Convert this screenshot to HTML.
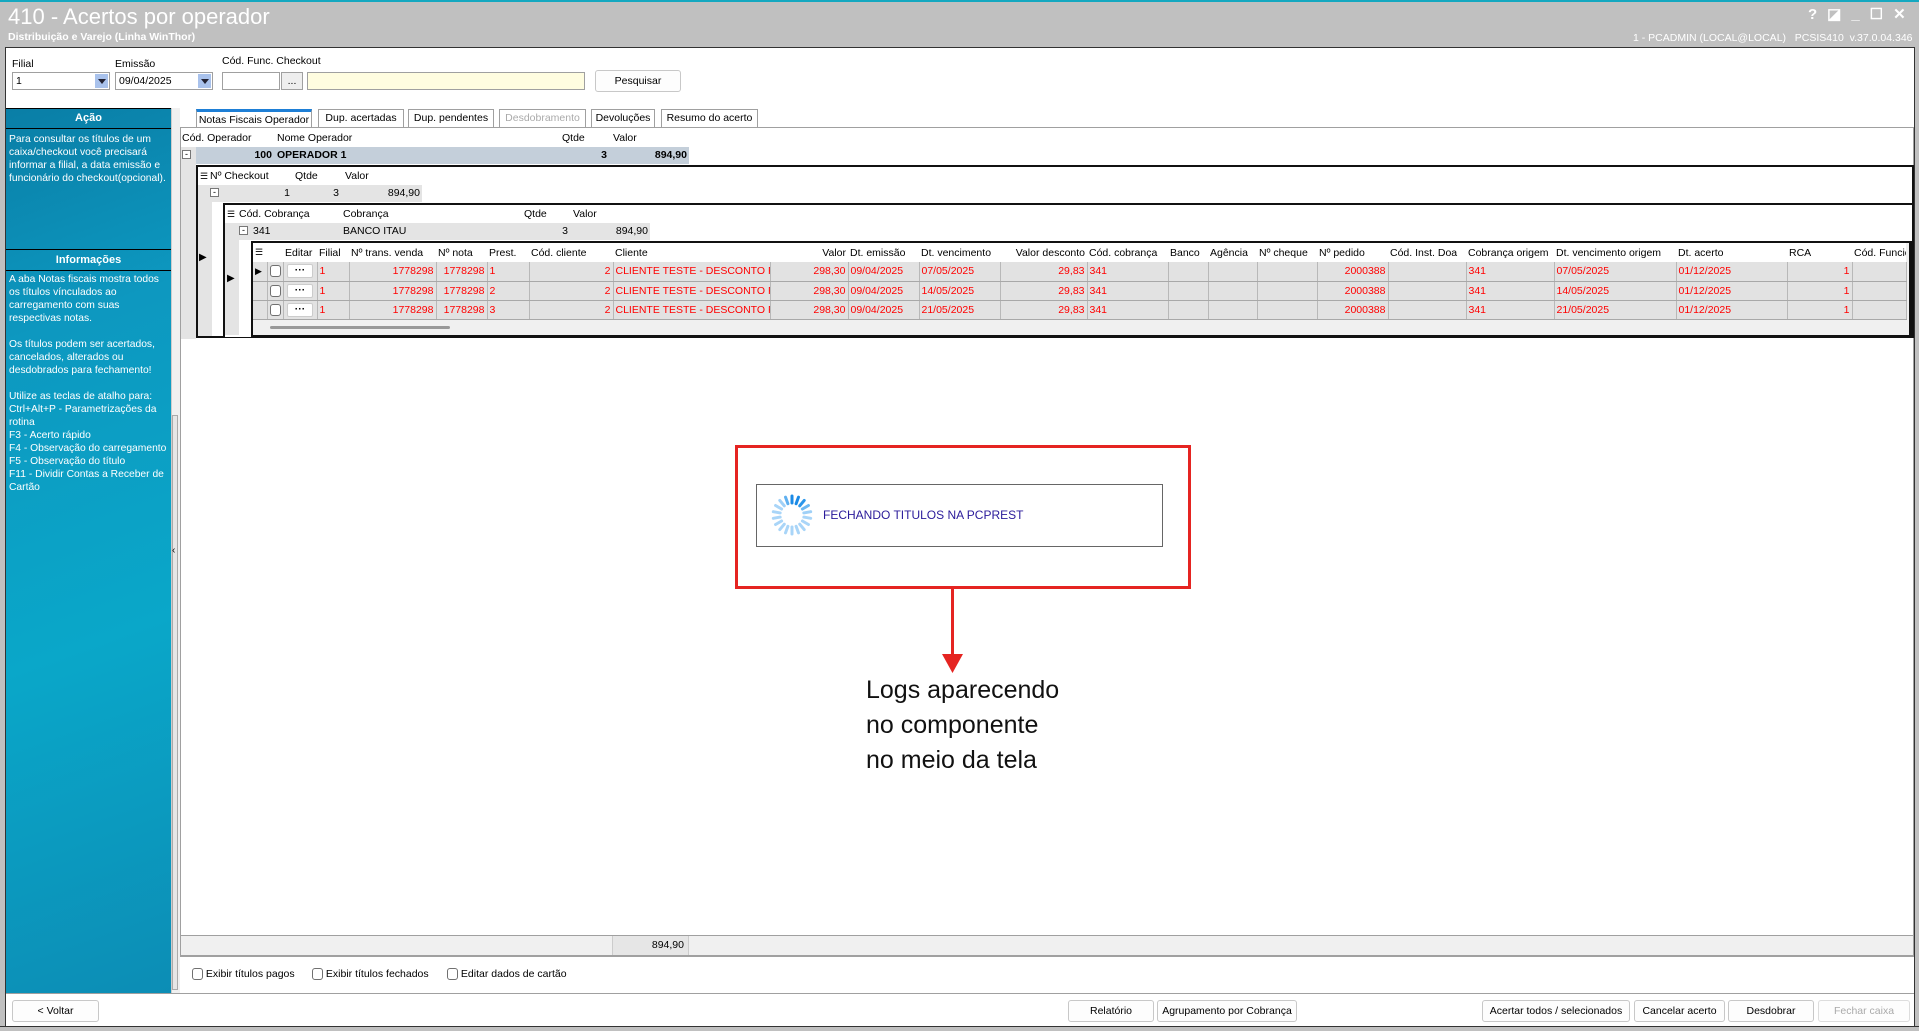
<!DOCTYPE html>
<html><head><meta charset="utf-8">
<style>
*{box-sizing:border-box;margin:0;padding:0}
body{width:1919px;height:1031px;position:relative;overflow:hidden;background:#fff;font-family:"Liberation Sans",sans-serif;font-size:10.5px;color:#000}
.a{position:absolute}
.btn{position:absolute;background:#fdfdfd;border:1px solid #c8c8c8;border-radius:3px;text-align:center;font-size:10.5px;line-height:20px;white-space:nowrap;overflow:hidden}
.inp{position:absolute;background:#fff;border:1px solid #a0a0a0;height:18px;font-size:10.5px;line-height:16px;padding-left:3px}
.dd{position:absolute;right:1px;top:1px;width:13px;height:14px;background:#a9c2ec}
.dd:after{content:"";position:absolute;left:3px;top:5px;border-left:4px solid transparent;border-right:4px solid transparent;border-top:5px solid #223}
.tab{position:absolute;top:109px;height:18px;border:1px solid #a0a0a0;border-bottom:none;background:#fff;font-size:10.5px;line-height:17px;text-align:center;white-space:nowrap;overflow:hidden}
.tx{position:absolute;white-space:nowrap}
.r{text-align:right}
table{border-collapse:collapse;table-layout:fixed;position:absolute;width:1653px}
td{white-space:nowrap;overflow:hidden;font-size:10.5px;padding:0 2px;height:19px}
.hd td{background:#fff;color:#000}
.rw td{background:#e2e2e2;color:#f00;border-right:1px solid #b8b8b8;border-bottom:1px solid #a8a8a8}
.cb{display:inline-block;width:11px;height:12px;border:1px solid #707070;border-radius:3px;background:#fff;vertical-align:middle}
.side{color:#fff;font-size:10.3px;line-height:13px}
</style></head><body>
<div class="a" style="left:0;top:0;width:1919px;height:47px;background:#c0c0c0;border-top:2px solid #14a8c0"></div>
<div class="tx" style="left:8px;top:4px;font-size:22px;color:#fff">410 - Acertos por operador</div>
<div class="tx" style="left:8px;top:31px;font-size:10.5px;color:#fff;font-weight:bold">Distribuição e Varejo (Linha WinThor)</div>
<div class="tx" style="left:1808px;top:5px;font-size:15px;color:#fff;font-weight:bold;letter-spacing:10px">?◪_☐✕</div>
<div class="tx" style="left:1633px;top:32px;font-size:10.5px;color:#fff">1 - PCADMIN (LOCAL@LOCAL) &nbsp; PCSIS410 &nbsp;v.37.0.04.346</div>
<div class="a" style="left:0;top:47px;width:6px;height:984px;background:#c0c0c0;border-right:1px solid #333"></div>
<div class="a" style="left:1914px;top:47px;width:5px;height:984px;background:#c0c0c0;border-left:1px solid #333"></div>
<div class="a" style="left:0;top:1026px;width:1919px;height:5px;background:#c0c0c0;border-top:1px solid #333"></div>
<div class="a" style="left:6px;top:47px;width:1908px;height:1px;background:#333"></div>
<div class="tx" style="left:12px;top:58px">Filial</div>
<div class="tx" style="left:115px;top:58px">Emissão</div>
<div class="tx" style="left:222px;top:55px">Cód. Func. Checkout</div>
<div class="inp" style="left:12px;top:72px;width:98px">1<div class="dd"></div></div>
<div class="inp" style="left:115px;top:72px;width:98px">09/04/2025<div class="dd"></div></div>
<div class="inp" style="left:222px;top:72px;width:58px"></div>
<div class="inp" style="left:281px;top:72px;width:22px;background:#eee;text-align:center;padding:0">...</div>
<div class="inp" style="left:307px;top:72px;width:278px;background:#fffde0"></div>
<div class="btn" style="left:595px;top:70px;width:86px;height:22px">Pesquisar</div>
<div class="a" style="left:6px;top:108px;width:165px;height:885px;background:linear-gradient(160deg,#0a7ea6 0%,#0d98c0 25%,#0aa7c9 60%,#0c8db5 100%)"></div>
<div class="a" style="left:6px;top:108px;width:165px;height:21px;border-top:1px solid #000;border-bottom:1px solid #000;color:#fff;font-weight:bold;text-align:center;line-height:19px;font-size:11px">Ação</div>
<div class="a side" style="left:9px;top:133px;width:162px">Para consultar os títulos de um caixa/checkout você precisará informar a filial, a data emissão e funcionário do checkout(opcional).</div>
<div class="a" style="left:6px;top:249px;width:165px;height:22px;border-top:1px solid #000;border-bottom:1px solid #000;color:#fff;font-weight:bold;text-align:center;line-height:20px;font-size:11px">Informações</div>
<div class="a side" style="left:9px;top:273px;width:162px">A aba Notas fiscais mostra todos os títulos vínculados ao carregamento com suas respectivas notas.<br><br>Os títulos podem ser acertados, cancelados, alterados ou desdobrados para fechamento!<br><br>Utilize as teclas de atalho para:<br>Ctrl+Alt+P - Parametrizações da rotina<br>F3 - Acerto rápido<br>F4 - Observação do carregamento<br>F5 - Observação do título<br>F11 - Dividir Contas a Receber de Cartão</div>
<div class="a" style="left:171px;top:108px;width:9px;height:885px;background:#f0f0f0;border-left:1px solid #ccc"></div>
<div class="a" style="left:172px;top:415px;width:6px;height:575px;background:#e6e6e6;border:1px solid #aaa"></div>
<div class="tx" style="left:172px;top:545px;font-size:10px">‹</div>
<div class="tab" style="left:196px;width:116px;border-top:3px solid #1e7fd6">Notas Fiscais Operador</div>
<div class="tab" style="left:318px;width:86px">Dup. acertadas</div>
<div class="tab" style="left:408px;width:86px">Dup. pendentes</div>
<div class="tab" style="left:499px;width:87px;color:#aaa">Desdobramento</div>
<div class="tab" style="left:591px;width:64px">Devoluções</div>
<div class="tab" style="left:661px;width:97px">Resumo do acerto</div>
<div class="a" style="left:180px;top:127px;width:1734px;height:830px;border:1px solid #a0a0a0;background:#fff"></div>
<div class="a" style="left:181px;top:147px;width:15px;height:192px;background:#e4e4e4"></div>
<div class="tx" style="left:182px;top:132px">Cód. Operador</div>
<div class="tx" style="left:277px;top:132px">Nome Operador</div>
<div class="tx" style="left:562px;top:132px">Qtde</div>
<div class="tx" style="left:613px;top:132px">Valor</div>
<div class="a" style="left:196px;top:147px;width:493px;height:17px;background:#c4cfda"></div>
<div class="a" style="left:182px;top:150px;width:9px;height:9px;border:1px solid #777;background:#fff;font-size:9px;line-height:6px;text-align:center">-</div>
<div class="tx r" style="left:200px;top:149px;width:72px;font-weight:bold">100</div>
<div class="tx" style="left:277px;top:149px;font-weight:bold">OPERADOR 1</div>
<div class="tx r" style="left:560px;top:149px;width:47px;font-weight:bold">3</div>
<div class="tx r" style="left:620px;top:149px;width:67px;font-weight:bold">894,90</div>
<div class="a" style="left:196px;top:165px;width:1718px;height:173px;border:2px solid #111;background:#fff"></div>
<div class="a" style="left:198px;top:185px;width:14px;height:151px;background:#e4e4e4"></div>
<div class="tx" style="left:200px;top:171px;font-size:9px">☰</div>
<div class="tx" style="left:210px;top:170px">Nº Checkout</div>
<div class="tx" style="left:295px;top:170px">Qtde</div>
<div class="tx" style="left:345px;top:170px">Valor</div>
<div class="a" style="left:212px;top:185px;width:210px;height:17px;background:#e4e4e4"></div>
<div class="a" style="left:210px;top:188px;width:9px;height:9px;border:1px solid #777;background:#fff;font-size:9px;line-height:6px;text-align:center">-</div>
<div class="tx r" style="left:250px;top:187px;width:40px">1</div>
<div class="tx r" style="left:300px;top:187px;width:39px">3</div>
<div class="tx r" style="left:350px;top:187px;width:70px">894,90</div>
<div class="tx" style="left:199px;top:252px;font-size:10px">▶</div>
<div class="a" style="left:223px;top:203px;width:1691px;height:134px;border:2px solid #111;border-bottom:none;background:#fff"></div>
<div class="a" style="left:225px;top:223px;width:14px;height:112px;background:#e4e4e4"></div>
<div class="tx" style="left:227px;top:209px;font-size:9px">☰</div>
<div class="tx" style="left:239px;top:208px">Cód. Cobrança</div>
<div class="tx" style="left:343px;top:208px">Cobrança</div>
<div class="tx" style="left:524px;top:208px">Qtde</div>
<div class="tx" style="left:573px;top:208px">Valor</div>
<div class="a" style="left:239px;top:223px;width:411px;height:17px;background:#e4e4e4"></div>
<div class="a" style="left:239px;top:226px;width:9px;height:9px;border:1px solid #777;background:#fff;font-size:9px;line-height:6px;text-align:center">-</div>
<div class="tx" style="left:253px;top:225px">341</div>
<div class="tx" style="left:343px;top:225px">BANCO ITAU</div>
<div class="tx r" style="left:520px;top:225px;width:48px">3</div>
<div class="tx r" style="left:580px;top:225px;width:68px">894,90</div>
<div class="tx" style="left:227px;top:273px;font-size:10px">▶</div>
<div class="a" style="left:251px;top:241px;width:1663px;height:96px;border:2px solid #111;border-right:none;background:#f0f0f0"></div>
<div class="a" style="left:1909px;top:241px;width:5px;height:96px;background:#111"></div>
<table style="left:253px;top:243px">
<colgroup><col style="width:14px"><col style="width:16px"><col style="width:34px"><col style="width:32px"><col style="width:87px"><col style="width:51px"><col style="width:42px"><col style="width:84px"><col style="width:157px"><col style="width:78px"><col style="width:71px"><col style="width:81px"><col style="width:87px"><col style="width:81px"><col style="width:40px"><col style="width:49px"><col style="width:60px"><col style="width:71px"><col style="width:78px"><col style="width:88px"><col style="width:122px"><col style="width:111px"><col style="width:65px"><col style="width:54px"></colgroup>
<tr class="hd" style="height:18px"><td style="font-size:9px">☰</td><td></td><td>Editar</td><td>Filial</td><td>Nº trans. venda</td><td>Nº nota</td><td>Prest.</td><td>Cód. cliente</td><td>Cliente</td><td class="r">Valor</td><td>Dt. emissão</td><td>Dt. vencimento</td><td class="r">Valor desconto</td><td>Cód. cobrança</td><td>Banco</td><td>Agência</td><td>Nº cheque</td><td>Nº pedido</td><td>Cód. Inst. Doa</td><td>Cobrança origem</td><td>Dt. vencimento origem</td><td>Dt. acerto</td><td>RCA</td><td>Cód. Funcio</td></tr>
<tr class="rw"><td style="color:#000;font-size:9px">▶</td><td><span class="cb"></span></td><td style="color:#000;text-align:center"><span style="display:inline-block;width:26px;height:14px;background:#fff;border:1px solid #ccc;border-radius:2px;line-height:10px;font-weight:bold">···</span></td><td>1</td><td class="r">1778298</td><td class="r">1778298</td><td>1</td><td class="r">2</td><td>CLIENTE TESTE - DESCONTO FI</td><td class="r">298,30</td><td>09/04/2025</td><td>07/05/2025</td><td class="r">29,83</td><td>341</td><td></td><td></td><td></td><td class="r">2000388</td><td></td><td>341</td><td>07/05/2025</td><td>01/12/2025</td><td class="r">1</td><td></td></tr>
<tr class="rw"><td></td><td><span class="cb"></span></td><td style="color:#000;text-align:center"><span style="display:inline-block;width:26px;height:14px;background:#fff;border:1px solid #ccc;border-radius:2px;line-height:10px;font-weight:bold">···</span></td><td>1</td><td class="r">1778298</td><td class="r">1778298</td><td>2</td><td class="r">2</td><td>CLIENTE TESTE - DESCONTO FI</td><td class="r">298,30</td><td>09/04/2025</td><td>14/05/2025</td><td class="r">29,83</td><td>341</td><td></td><td></td><td></td><td class="r">2000388</td><td></td><td>341</td><td>14/05/2025</td><td>01/12/2025</td><td class="r">1</td><td></td></tr>
<tr class="rw"><td></td><td><span class="cb"></span></td><td style="color:#000;text-align:center"><span style="display:inline-block;width:26px;height:14px;background:#fff;border:1px solid #ccc;border-radius:2px;line-height:10px;font-weight:bold">···</span></td><td>1</td><td class="r">1778298</td><td class="r">1778298</td><td>3</td><td class="r">2</td><td>CLIENTE TESTE - DESCONTO FI</td><td class="r">298,30</td><td>09/04/2025</td><td>21/05/2025</td><td class="r">29,83</td><td>341</td><td></td><td></td><td></td><td class="r">2000388</td><td></td><td>341</td><td>21/05/2025</td><td>01/12/2025</td><td class="r">1</td><td></td></tr>
</table>
<div class="a" style="left:270px;top:326px;width:180px;height:3px;background:#999;border-radius:2px"></div>
<div class="a" style="left:181px;top:935px;width:1732px;height:21px;background:#f0f0f0;border-top:1px solid #a0a0a0;border-bottom:1px solid #a0a0a0"></div>
<div class="a r" style="left:612px;top:936px;width:77px;height:19px;background:#e6e6e6;border-left:1px solid #ccc;border-right:1px solid #ccc;line-height:19px;padding-right:4px">894,90</div>
<div class="tx" style="left:192px;top:968px"><span class="cb"></span> Exibir títulos pagos</div>
<div class="tx" style="left:312px;top:968px"><span class="cb"></span> Exibir títulos fechados</div>
<div class="tx" style="left:447px;top:968px"><span class="cb"></span> Editar dados de cartão</div>
<div class="a" style="left:6px;top:993px;width:1908px;height:1px;background:#a0a0a0"></div>
<div class="btn" style="left:12px;top:1000px;width:87px;height:22px">&lt; Voltar</div>
<div class="btn" style="left:1068px;top:1000px;width:86px;height:22px">Relatório</div>
<div class="btn" style="left:1157px;top:1000px;width:140px;height:22px">Agrupamento por Cobrança</div>
<div class="btn" style="left:1482px;top:1000px;width:148px;height:22px">Acertar todos / selecionados</div>
<div class="btn" style="left:1634px;top:1000px;width:91px;height:22px">Cancelar acerto</div>
<div class="btn" style="left:1728px;top:1000px;width:86px;height:22px">Desdobrar</div>
<div class="btn" style="left:1818px;top:1000px;width:92px;height:22px;color:#aaa;border-color:#ddd">Fechar caixa</div>
<div class="a" style="left:735px;top:445px;width:456px;height:144px;border:3px solid #e52421"></div>
<div class="a" style="left:756px;top:484px;width:407px;height:63px;border:1px solid #666;background:#fff"></div>
<svg class="a" style="left:770px;top:493px" width="44" height="44" viewBox="-22 -22 44 44">
<g stroke-width="3" stroke-linecap="round">
<line x1="0" y1="-19" x2="0" y2="-12" stroke="#1a8ae6" transform="rotate(0)"/>
<line x1="0" y1="-19" x2="0" y2="-12" stroke="#1a8ae6" transform="rotate(20)"/>
<line x1="0" y1="-19" x2="0" y2="-12" stroke="#2b96ea" transform="rotate(40)"/>
<line x1="0" y1="-19" x2="0" y2="-12" stroke="#6cb8f2" transform="rotate(60)"/>
<line x1="0" y1="-19" x2="0" y2="-12" stroke="#9fd0f7" transform="rotate(80)"/>
<line x1="0" y1="-19" x2="0" y2="-12" stroke="#a9d5f8" transform="rotate(100)"/>
<line x1="0" y1="-19" x2="0" y2="-12" stroke="#a9d5f8" transform="rotate(120)"/>
<line x1="0" y1="-19" x2="0" y2="-12" stroke="#a9d5f8" transform="rotate(140)"/>
<line x1="0" y1="-19" x2="0" y2="-12" stroke="#a9d5f8" transform="rotate(160)"/>
<line x1="0" y1="-19" x2="0" y2="-12" stroke="#a9d5f8" transform="rotate(180)"/>
<line x1="0" y1="-19" x2="0" y2="-12" stroke="#a9d5f8" transform="rotate(200)"/>
<line x1="0" y1="-19" x2="0" y2="-12" stroke="#a9d5f8" transform="rotate(220)"/>
<line x1="0" y1="-19" x2="0" y2="-12" stroke="#a9d5f8" transform="rotate(240)"/>
<line x1="0" y1="-19" x2="0" y2="-12" stroke="#a9d5f8" transform="rotate(260)"/>
<line x1="0" y1="-19" x2="0" y2="-12" stroke="#a9d5f8" transform="rotate(280)"/>
<line x1="0" y1="-19" x2="0" y2="-12" stroke="#a9d5f8" transform="rotate(300)"/>
<line x1="0" y1="-19" x2="0" y2="-12" stroke="#9fd0f7" transform="rotate(320)"/>
<line x1="0" y1="-19" x2="0" y2="-12" stroke="#5fb0f0" transform="rotate(340)"/>
</g></svg>
<div class="tx" style="left:823px;top:508px;font-size:12px;color:#2a1a9a">FECHANDO TITULOS NA PCPREST</div>
<div class="a" style="left:951px;top:588px;width:3px;height:70px;background:#e52421"></div>
<svg class="a" style="left:942px;top:654px" width="22" height="20"><polygon points="0,0 21,0 10.5,19" fill="#e52421"/></svg>
<div class="tx" style="left:866px;top:673px;font-size:25px;line-height:35px;color:#111">Logs aparecendo<br>no componente<br>no meio da tela</div>
</body></html>
